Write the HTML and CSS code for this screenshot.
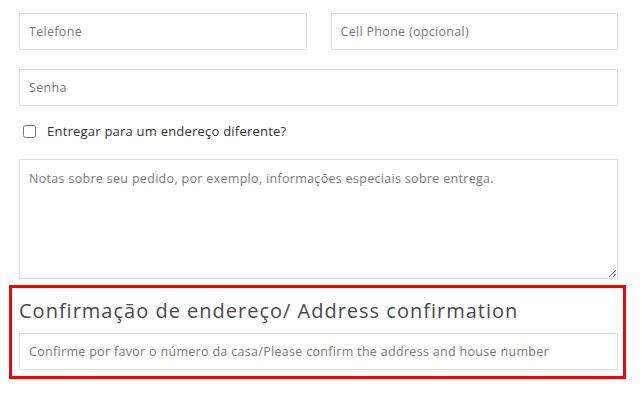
FILE: index.html
```html
<!DOCTYPE html>
<html lang="pt">
<head>
<meta charset="utf-8">
<link rel="stylesheet" href="styles.css">
</head>
<body>
<form class="form">
  <div class="pair">
    <input class="field" type="text" placeholder="Telefone">
    <input class="field" type="text" placeholder="Cell Phone (opcional)">
  </div>
  <input class="field single" type="password" placeholder="Senha">
  <label class="check">
    <input type="checkbox" class="box">
    <span>Entregar para um endereço diferente?</span>
  </label>
  <textarea class="field notes" placeholder="Notas sobre seu pedido, por exemplo, informações especiais sobre entrega."></textarea>
  <div class="confirm">
    <h3 class="confirm-title">Confirmação de endereço/ Address confirmation</h3>
    <input class="field" type="text" placeholder="Confirme por favor o número da casa/Please confirm the address and house number">
  </div>
</form>
</body>
</html>
```

FILE: styles.css
```css
* { box-sizing: border-box; }
html, body { margin: 0; padding: 0; background: #fff; }
body { font-family: "Open Sans", "Lato", sans-serif; }

.form {
  width: 642px;
  padding: 13px 24px 0 19px;
  display: flex;
  flex-direction: column;
}

.pair {
  display: grid;
  grid-template-columns: 1fr 1fr;
  gap: 24px;
}

.field {
  display: block;
  width: 100%;
  height: 37px;
  margin: 0;
  padding: 0 9px;
  border: 1px solid #dedede;
  border-radius: 0;
  background: #fff;
  font-family: "Open Sans", "Lato", sans-serif;
  font-size: 12.5px;
  letter-spacing: 0.31px;
  color: #555;
  outline: none;
}
.field::placeholder { color: #7a7a7a; opacity: 1; }

.single { margin-top: 19px; }

.check {
  display: flex;
  align-items: center;
  gap: 11px;
  margin-top: 18px;
  height: 14px;
  font-size: 13px;
  letter-spacing: 0.22px;
  color: #333;
}
.box { margin: 0 0 0 4px; width: 13px; height: 13px; }

.notes {
  height: 120px;
  margin-top: 21px;
  padding: 10px 9px;
  resize: vertical;
  line-height: 18px;
}

.confirm {
  margin: 6px 0 0 -10px;
  width: 617px;
  border: 3px solid #ff0000;
  padding: 0 5px 6px 7px;
}
.confirm-title {
  margin: 0;
  padding: 11px 0 10px;
  font-size: 20px;
  font-weight: 500;
  letter-spacing: 1px;
  line-height: 24px;
  color: #4a4a4a;
}
```
